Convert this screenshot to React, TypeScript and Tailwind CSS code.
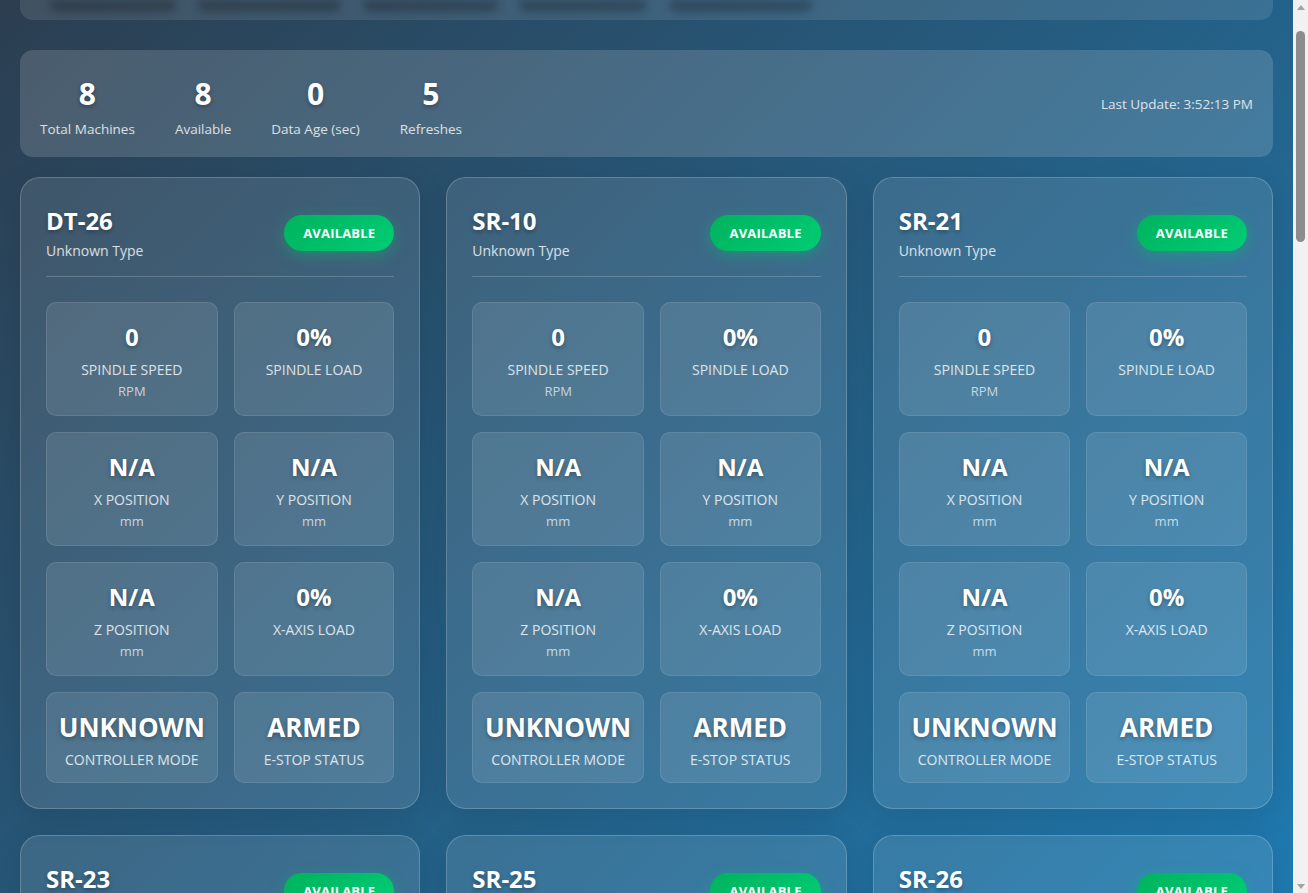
import React from "react";

type Metric = { value: string; label: string; unit?: string; big?: boolean };

const machines = ["DT-26", "SR-10", "SR-21", "SR-23", "SR-25", "SR-26", "SR-27", "SR-28"];

const metrics: Metric[] = [
  { value: "0", label: "Spindle Speed", unit: "RPM" },
  { value: "0%", label: "Spindle Load" },
  { value: "N/A", label: "X Position", unit: "mm" },
  { value: "N/A", label: "Y Position", unit: "mm" },
  { value: "N/A", label: "Z Position", unit: "mm" },
  { value: "0%", label: "X-Axis Load" },
  { value: "UNKNOWN", label: "Controller Mode", big: true },
  { value: "ARMED", label: "E-Stop Status", big: true },
];

const stats = [
  { n: "8", l: "Total Machines" },
  { n: "8", l: "Available" },
  { n: "0", l: "Data Age (sec)" },
  { n: "5", l: "Refreshes" },
];

function Tile({ m }: { m: Metric }) {
  return (
    <div className="flex flex-col items-center rounded-[10px] border border-white/10 bg-white/10 pt-[18px] pb-[12px] text-center">
      <div
        className={
          "font-bold leading-[32px] text-white [text-shadow:0_2px_4px_rgba(0,0,0,0.3)] " +
          (m.big ? "text-[26px]" : "text-[24px]")
        }
      >
        {m.value}
      </div>
      <div className="mt-[7px] text-[14px] leading-[20px] uppercase text-white/80">{m.label}</div>
      {m.unit && <div className="text-[13px] leading-[23px] text-white/70">{m.unit}</div>}
    </div>
  );
}

function Card({ name }: { name: string }) {
  return (
    <div className="rounded-[20px] border border-white/20 bg-white/10 p-[25px] shadow-[0_8px_32px_rgba(0,0,0,0.1)]">
      <div className="flex items-center justify-between border-b border-white/20 pb-[13px]">
        <div>
          <div className="text-[24px] font-bold leading-[36px] text-white [text-shadow:0_2px_4px_rgba(0,0,0,0.3)]">
            {name}
          </div>
          <div className="text-[14px] leading-[24px] text-white/80">Unknown Type</div>
        </div>
        <div className="rounded-full bg-[linear-gradient(135deg,#00b35e,#00cc75)] px-[19px] py-[9px] text-[13px] font-bold leading-[18px] uppercase tracking-[0.2px] text-white shadow-[0_4px_15px_rgba(0,200,110,0.4)]">
          Available
        </div>
      </div>
      <div className="mt-[25px] grid grid-cols-[172fr_161fr] gap-[16px]">
        {metrics.map((m, i) => (
          <Tile key={i} m={m} />
        ))}
      </div>
    </div>
  );
}

function Scrollbar() {
  return (
    <div className="flex h-full w-[15px] shrink-0 flex-col items-center bg-[#f1f1f1]">
      <div className="mt-[5px] h-0 w-0 border-x-[4px] border-b-[5px] border-x-transparent border-b-[#a3a3a3]" />
      <div className="mt-[21px] h-[211px] w-[9px] rounded-full bg-[#8c8c8c]" />
      <div className="flex-1" />
      <div className="mb-[4px] h-0 w-0 border-x-[4px] border-t-[5px] border-x-transparent border-t-[#a3a3a3]" />
    </div>
  );
}

export default function App() {
  return (
    <div
      className="flex h-[893px] overflow-hidden"
      style={{ fontFamily: '"Open Sans", "Noto Sans", sans-serif' }}
    >
      <div className="h-full min-w-0 flex-1 overflow-hidden bg-[linear-gradient(135deg,#2c3e50_0%,#1f7ab0_100%)] px-[20px] pb-[20px] text-white">
        <div className="flex h-[20px] gap-[22px] overflow-hidden rounded-b-[13px] bg-white/10 px-[30px]">
          {[126, 143, 135, 127, 143].map((w, i) => (
            <div key={i} className="h-[12px] shrink-0 rounded-b-[8px] bg-black/25 blur-[4px]" style={{ width: w }} />
          ))}
        </div>
        <div className="mt-[30px] flex items-start justify-between rounded-[13px] bg-white/15 px-[20px] pt-[26px] pb-[18px]">
          <div className="flex gap-[40px]">
            {stats.map((s, i) => (
              <div key={i} className="text-center">
                <div className="text-[30px] font-bold leading-[36px] text-white [text-shadow:0_2px_4px_rgba(0,0,0,0.3)]">
                  {s.n}
                </div>
                <div className="mt-[7px] text-[13.5px] leading-[20px] text-white/80">{s.l}</div>
              </div>
            ))}
          </div>
          <div className="mt-[18px] text-[13.5px] leading-[20px] text-white/80">Last Update: 3:52:13 PM</div>
        </div>
        <div className="mt-[20px] grid grid-cols-3 gap-[26px]">
          {machines.map((n) => (
            <Card key={n} name={n} />
          ))}
        </div>
      </div>
      <Scrollbar />
    </div>
  );
}
